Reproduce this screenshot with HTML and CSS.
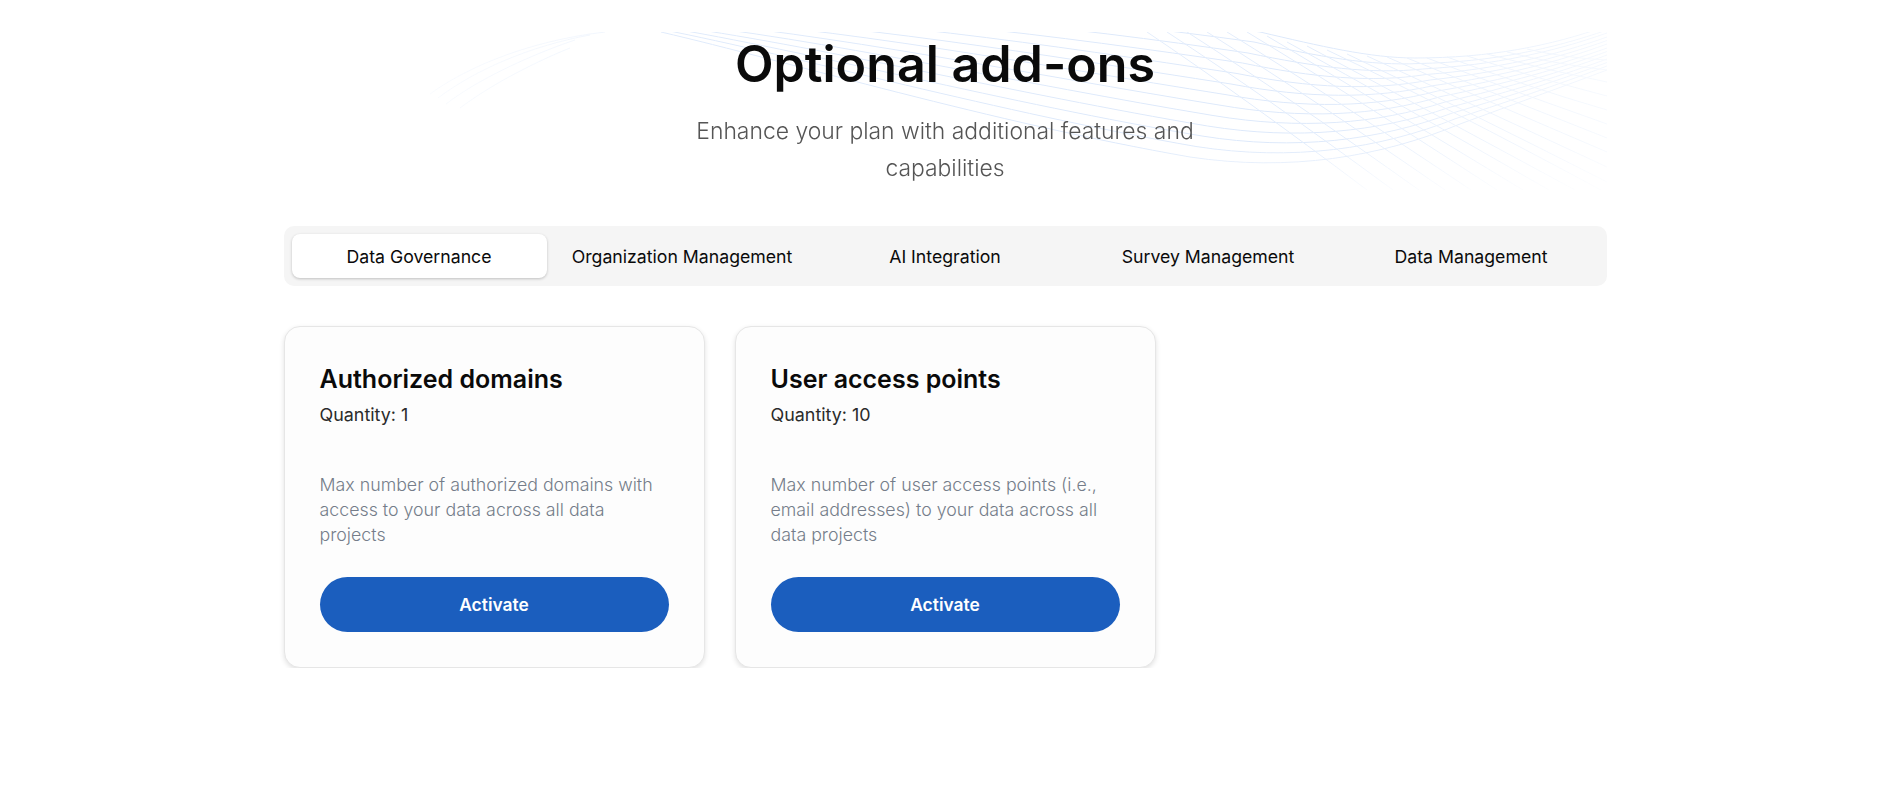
FILE: index.html
```html
<!DOCTYPE html>
<html lang="en">
<head>
<meta charset="utf-8">
<title>Optional add-ons</title>
<link rel="stylesheet" href="styles.css">
</head>
<body>
<main class="page">
  <header class="hero">
    <svg class="mesh" viewBox="0 0 1177 158" aria-hidden="true">
      <defs>
        <linearGradient id="fadex" x1="0" x2="1" y1="0" y2="0">
          <stop offset="0" stop-color="#fff" stop-opacity="0.35"/>
          <stop offset="0.2" stop-color="#fff" stop-opacity="0.9"/>
          <stop offset="0.75" stop-color="#fff" stop-opacity="1"/>
          <stop offset="1" stop-color="#fff" stop-opacity="0.3"/>
        </linearGradient>
        <linearGradient id="fadey" x1="0" x2="0" y1="0" y2="1">
          <stop offset="0" stop-color="#fff" stop-opacity="1"/>
          <stop offset="0.7" stop-color="#fff" stop-opacity="1"/>
          <stop offset="1" stop-color="#fff" stop-opacity="0.2"/>
        </linearGradient>
        <mask id="maskx" maskUnits="userSpaceOnUse" x="0" y="0" width="1177" height="158"><rect width="1177" height="158" fill="url(#fadex)"/></mask>
        <mask id="masky" maskUnits="userSpaceOnUse" x="0" y="0" width="1177" height="158"><rect width="1177" height="158" fill="url(#fadey)"/></mask>
      </defs>
      <g mask="url(#maskx)">
        <g mask="url(#masky)" fill="none" stroke="#dde9fb" stroke-width="1">
          <path d="M240 -30C450 -40 650 -25 830 0C890 14 940 26 985 26C1060 26 1120 14 1177 -6"/>
          <path d="M239 -27.5C442.5 -34 642.5 -15 824 10C887.5 24.5 941 34 989 31.5C1062.5 30 1122 17 1177 -2"/>
          <path d="M238.5 -25C435 -28 635 -6 818 21C885 35 942 42.5 992.5 37C1065 33 1123 20 1177 1"/>
          <path d="M238 -22.5C427.5 -22.5 627.5 4 812.5 31C882.5 45.5 942.5 51 996 42.5C1067.5 37 1125 23.5 1177 5"/>
          <path d="M237 -20C420 -17 620 13 807 41.5C880 56 943 59 1000 48C1070 40.5 1127 26.5 1177 8.5"/>
          <path d="M236 -17.5C412.5 -11 612.5 23 801 52C877.5 66.5 944 67 1004 53.5C1072.5 44 1128 30 1177 12"/>
          <path d="M235.5 -15C405 -5 605 32.5 795 62.5C875 77 945 75.5 1007.5 59C1075 48 1130 33 1177 16"/>
          <path d="M235 -12.5C397.5 1 597.5 42 789 73C872.5 87.5 946 84 1011 64.5C1077.5 51.5 1132 36 1177 19.5"/>
          <path d="M234 -10C390 6.5 590 51.5 783 83.5C870 98 947 92 1015 70C1080 55 1133 39.5 1177 23"/>
          <path d="M233 -7.5C382.5 12.5 582.5 61 777.5 94C867.5 108.5 947.5 100 1019 75.5C1082.5 59 1135 42.5 1177 27"/>
          <path d="M232.5 -5C375 18 575 71 772 104C865 119 948 108.5 1022.5 81C1085 62.5 1137 45.5 1177 30.5"/>
          <path d="M232 -2.5C367.5 24 567.5 80 766 114.5C862.5 129.5 949 117 1026 86.5C1087.5 66.5 1138 49 1177 34"/>
          <path d="M231 0C360 30 560 90 760 125C860 140 950 125 1030 92C1090 70 1140 52 1177 38"/>
          <path class="soft" d="M0 62C30 40 90 10 175 0"/>
          <path class="soft" d="M8 66C45 38 100 14 160 3"/>
          <path class="soft" d="M16 72C55 42 115 18 145 8"/>
          <path class="soft" d="M30 76C70 46 120 24 140 16"/>
        </g>
        <g mask="url(#masky)" fill="none" stroke="#e3edfc" stroke-width="1">
          <path d="M717 0Q815 66 937 158"/>
          <path d="M737 0Q838 66 963 158"/>
          <path d="M757 0Q860 66 989 158"/>
          <path d="M777 0Q882 66 1015 158"/>
          <path d="M797 0Q904 66 1041 158"/>
          <path d="M817 0Q926 66 1067 158"/>
          <path d="M837 4Q948 70 1093 158"/>
          <path d="M857 10Q970 72 1119 158"/>
          <path d="M877 14Q990 74 1145 158"/>
          <path d="M897 18Q1015 74 1171 158"/>
          <path d="M917 22Q1040 80 1177 150"/>
          <path d="M937 24Q1050 76 1177 135"/>
          <path d="M957 25Q1060 70 1177 120"/>
          <path d="M977 26Q1075 66 1177 106"/>
          <path d="M997 26Q1085 60 1177 92"/>
          <path d="M1017 25Q1095 54 1177 78"/>
          <path d="M1037 24Q1105 46 1177 64"/>
          <path d="M1057 22Q1115 38 1177 50"/>
          <path d="M1077 20Q1125 32 1177 38"/>
          <path d="M1097 17Q1135 26 1177 28"/>
        </g>
      </g>
    </svg>
    <h1 class="title">Optional add-ons</h1>
    <p class="subtitle">Enhance your plan with additional features and capabilities</p>
  </header>

  <nav class="tabs">
    <button class="tab tab-active">Data Governance</button>
    <button class="tab">Organization Management</button>
    <button class="tab">AI Integration</button>
    <button class="tab">Survey Management</button>
    <button class="tab">Data Management</button>
  </nav>

  <section class="cards">
    <article class="card">
      <h2 class="card-title">Authorized domains</h2>
      <p class="quantity">Quantity: 1</p>
      <p class="desc">Max number of authorized domains with access to your data across all data projects</p>
      <button class="activate">Activate</button>
    </article>
    <article class="card">
      <h2 class="card-title">User access points</h2>
      <p class="quantity">Quantity: 10</p>
      <p class="desc">Max number of user access points (i.e., email addresses) to your data across all data projects</p>
      <button class="activate">Activate</button>
    </article>
  </section>
</main>
</body>
</html>
```
FILE: styles.css
```css
* { box-sizing: border-box; }
html, body { margin: 0; padding: 0; }
body {
  background: #fff;
  font-family: "Inter", "Liberation Sans", sans-serif;
  color: #0a0a0a;
  overflow: hidden;
}
.page {
  width: 1323px;
  margin: 0 auto;
  padding-top: 32px;
}
.hero {
  position: relative;
  height: 194px;
  text-align: center;
  padding-top: 2px;
}
.mesh {
  position: absolute;
  top: 0;
  left: 146px;
  width: 1177px;
  height: 158px;
}
.soft { opacity: 0.5; }
.title {
  position: relative;
  margin: 0;
  font-size: 50.2px;
  line-height: 60px;
  font-weight: 600;
  color: #0a0a0a;
}
.subtitle {
  position: relative;
  width: 560px;
  margin: 19px auto 0;
  font-size: 22.9px;
  line-height: 37px;
  font-weight: 300;
  color: #555;
}
.tabs {
  display: grid;
  grid-template-columns: repeat(5, 1fr);
  gap: 8px;
  height: 60px;
  padding: 8px;
  background: #f5f5f5;
  border-radius: 10px;
}
.tab {
  border: 0;
  background: transparent;
  font: 400 17.7px "Inter", sans-serif;
  color: #0a0a0a;
  border-radius: 8px;
}
.tab-active {
  background: #fff;
  box-shadow: 0 1px 3px rgba(0, 0, 0, 0.22);
}
.cards {
  display: grid;
  grid-template-columns: repeat(3, 1fr);
  gap: 30px;
  margin-top: 40px;
  align-items: start;
}
.card {
  padding: 36px 35px 35px;
  background: #fdfdfd;
  border: 1px solid #e6e6e6;
  border-radius: 16px;
  box-shadow: 0 2px 5px rgba(0, 0, 0, 0.12);
}
.card-title {
  margin: 0;
  font-size: 25px;
  line-height: 32px;
  font-weight: 600;
}
.quantity {
  margin: 8px 0 0;
  font-size: 17.9px;
  line-height: 24px;
  color: #2b2b2b;
}
.desc {
  margin: 45px 0 0;
  height: 75px;
  font-size: 17.8px;
  line-height: 25px;
  font-weight: 300;
  color: #757d8a;
}
.activate {
  display: block;
  width: 100%;
  height: 55px;
  margin-top: 30px;
  border: 0;
  border-radius: 28px;
  background: #1b5ebe;
  color: #fff;
  font: 600 17.4px "Inter", sans-serif;
}
```
